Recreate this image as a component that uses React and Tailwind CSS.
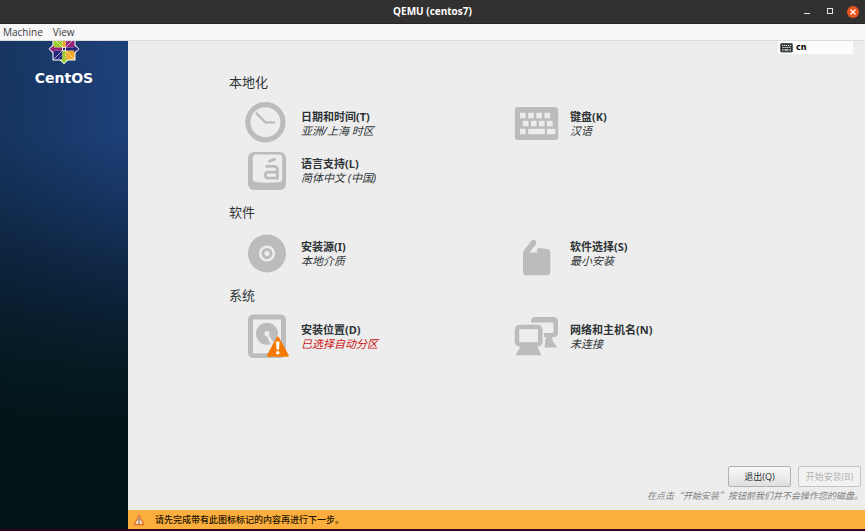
import React from "react";

function ClockIcon() {
  return (
    <svg width="44" height="44" viewBox="0 0 44 44" fill="none" stroke="#bcbcbc" aria-hidden="true">
      <circle cx="21.4" cy="20.2" r="17.6" strokeWidth="5.2" />
      <path d="M12 10.800 L21.400 20.400 H30.800" strokeWidth="2.4" />
    </svg>
  );
}

function KeyboardIcon() {
  const keys = [
    [7, 10.8, 5.6], [15.2, 10.8, 5.6], [23.3, 10.8, 5.6], [31.5, 10.8, 5.6],
    [9.8, 18.8, 5.6], [18, 18.8, 5.6], [26, 18.8, 5.6], [34, 18.8, 5.6],
    [7, 26.8, 5.6], [15.2, 26.8, 16.6], [34, 26.8, 8.4],
  ];
  return (
    <svg className="overflow-visible" width="44" height="44" viewBox="0 0 44 44" aria-hidden="true">
      <rect x="1.8" y="5" width="43.4" height="33" rx="3" fill="#bcbcbc" />
      {keys.map(([x, y, w]) => (
        <rect key={`${x}-${y}`} x={x} y={y} width={w} height="5.4" fill="#ededed" />
      ))}
    </svg>
  );
}

function LanguageIcon() {
  return (
    <svg width="44" height="44" viewBox="0 0 44 44" aria-hidden="true">
      <rect x="4" y="3" width="38" height="38" rx="6" fill="#bcbcbc" />
      <path d="M12 5.500 H35 Q38.200 5.500 38.200 9 V30 Q38.200 32.500 35 33 Q23.500 34.500 12 33 Q8.800 32.500 8.800 30 V9 Q8.800 5.500 12 5.500Z" fill="#ededed" />
      <g fill="none" stroke="#bcbcbc" strokeWidth="2.8">
        <path d="M24.300 12.600 L31.800 9.800" />
        <path d="M21.500 17.300 H30 Q33.400 17.300 33.400 20.500 V29.200 H24.500 Q21.300 29.200 21.300 26.200 Q21.300 23.200 24.500 23.200 H33.400" />
      </g>
    </svg>
  );
}

function DiscIcon() {
  return (
    <svg width="44" height="44" viewBox="0 0 44 44" aria-hidden="true">
      <circle cx="23" cy="21.5" r="19" fill="#bcbcbc" />
      <circle cx="23" cy="21.5" r="6.8" fill="#bcbcbc" stroke="#ededed" strokeWidth="2.6" />
      <circle cx="23" cy="21.5" r="2.6" fill="#ededed" />
    </svg>
  );
}

function PackageIcon() {
  return (
    <svg width="44" height="44" viewBox="0 0 44 44" aria-hidden="true">
      <path
        d="M10 20 L18 9 Q20 6.800 22.300 8.500 Q24.300 10.500 22.500 13 L16.500 20.500 H24.800 L23.700 18.500 Q24 15.800 26.800 16 L35 17.200 Q37.300 17.500 37.300 20 V40 Q37.300 43.300 34 43.300 H13 Q10 43.300 10 40Z"
        fill="#bcbcbc"
      />
    </svg>
  );
}

function DiskIcon() {
  return (
    <svg className="overflow-visible" width="44" height="44" viewBox="0 0 44 44" aria-hidden="true">
      <rect x="4" y="-0.5" width="38" height="43.5" rx="5" fill="#bcbcbc" />
      <rect x="9" y="4.5" width="28" height="33.8" fill="#ededed" />
      <circle cx="23" cy="18.700" r="11" fill="#bcbcbc" />
      <circle cx="23" cy="18.700" r="2.600" fill="#ededed" />
      <path d="M22.500 18.500 L36 38 L30 35Z" fill="#bcbcbc" stroke="#ededed" strokeWidth="1.500" />
      <path d="M33.800 22.800 L43.500 40.500 H24.200Z" fill="#f57900" stroke="#f57900" strokeWidth="2.500" strokeLinejoin="round" />
      <path d="M32 26.500 H35.500 L35 34.500 H32.500Z" fill="#fff" />
      <circle cx="33.800" cy="37.700" r="1.800" fill="#fff" />
    </svg>
  );
}

function NetworkIcon() {
  return (
    <svg className="overflow-visible" width="44" height="44" viewBox="0 0 44 44" aria-hidden="true">
      <path d="M33 20 H39.500 V26 L44.500 32.500 H31.500Z" fill="#bcbcbc" />
      <path d="M18 7.500 V7 Q18 2 22.500 2 H40.500 Q45 2 45 6.500 V18 Q45 22 41 22 H31 V18 H38.500 Q40.500 18 40.500 16 V9.500 Q40.500 7.500 38.500 7.500Z" fill="#bcbcbc" />
      <path d="M8 31 H24 L28.500 40.300 H2.500Z" fill="#bcbcbc" />
      <rect x="4" y="12" width="23.3" height="17.5" rx="2.5" fill="#ededed" stroke="#bcbcbc" strokeWidth="4.500" />
    </svg>
  );
}

function CentosLogo() {
  return (
    <svg width="32" height="24" viewBox="-16 -8 32 24" aria-hidden="true">
      <path d="M0 -15.500 L15.500 0 L0 15.500 L-15.500 0Z" fill="#e4e4ee" />
      <g stroke="#fff" strokeWidth="1">
        <rect x="-11" y="-11" width="10" height="10" fill="#9ccd2a" />
        <rect x="1" y="-11" width="10" height="10" fill="#932279" />
        <rect x="-11" y="1" width="10" height="10" fill="#262577" />
        <rect x="1" y="1" width="10" height="10" fill="#efa724" />
      </g>
      <path d="M-10.500 -10.500 L10.500 10.500 M10.500 -10.500 L-10.500 10.500" stroke="#fff" strokeWidth="0.8" opacity="0.8" />
      <path d="M-7 -11 L0 -4 L7 -11 M-7 11 L0 4 L7 11" fill="none" stroke="#fff" strokeWidth="0.6" opacity="0.6" />
      <path d="M-14.500 0 L-10 -3.500 V-1.400 H-2 V1.400 H-10 V3.500Z" fill="#932279" />
      <path d="M14.500 0 L10 -3.500 V-1.400 H2 V1.400 H10 V3.500Z" fill="#262577" />
      <path d="M0 14.500 L-3.500 10 H-1.400 V2 H1.400 V10 H3.500Z" fill="#9ccd2a" />
      <path d="M-1.400 -2 V-10 H1.400 V-2Z" fill="#efa724" />
      <rect x="-1.3" y="-1.3" width="2.6" height="2.6" fill="#262577" stroke="#fff" strokeWidth="0.6" />
    </svg>
  );
}

function LayoutIcon() {
  return (
    <svg width="13" height="10" viewBox="0 0 13 10" aria-hidden="true">
      <rect x="0.500" y="0.500" width="12" height="8.5" rx="1" fill="#2e3436" stroke="#59605f" />
      <path d="M2 2.500 H11 M2.500 4.500 H11" stroke="#f0f0f0" strokeWidth="1.200" strokeDasharray="1.300 0.700" />
      <path d="M2 6.800 H3.500 M4.500 6.800 H8.500 M9.500 6.800 H11" stroke="#f0f0f0" strokeWidth="1.200" />
    </svg>
  );
}

function WarningIcon() {
  return (
    <svg width="12" height="12" viewBox="0 0 12 12" aria-hidden="true">
      <path d="M6 1.500 L10.800 10.500 H1.200Z" fill="#f3e9d6" stroke="#e0702a" strokeWidth="1.400" strokeLinejoin="round" />
      <path d="M6 4.500 V7.500 M6 8.300 V9.500" stroke="#5c4a3a" strokeWidth="1.200" />
    </svg>
  );
}

const sections = [
  {
    title: "本地化",
    items: [
      { name: "日期和时间(T)", status: "亚洲/上海 时区", Icon: ClockIcon },
      { name: "键盘(K)", status: "汉语", Icon: KeyboardIcon },
      { name: "语言支持(L)", status: "简体中文 (中国)", Icon: LanguageIcon },
    ],
  },
  {
    title: "软件",
    items: [
      { name: "安装源(I)", status: "本地介质", Icon: DiscIcon },
      { name: "软件选择(S)", status: "最小安装", Icon: PackageIcon },
    ],
  },
  {
    title: "系统",
    items: [
      { name: "安装位置(D)", status: "已选择自动分区", Icon: DiskIcon, warn: true },
      { name: "网络和主机名(N)", status: "未连接", Icon: NetworkIcon },
    ],
  },
];

function Spoke({ name, status, Icon, warn }) {
  return (
    <button type="button" className="flex h-[46px] items-center gap-[13px] text-left text-[11px] leading-[14px] text-[#2e3436]">
      <span className="w-11 shrink-0">
        <Icon />
      </span>
      <span className="flex flex-col whitespace-nowrap">
        <span className="font-bold">{name}</span>
        <span className={warn ? "italic text-[#cc1414]" : "italic"}>{status}</span>
      </span>
    </button>
  );
}

function TitleBar() {
  return (
    <header className="grid h-6 shrink-0 grid-cols-[1fr_auto_1fr] items-center border-b border-[#252323] bg-[#333030] font-['Open_Sans',sans-serif] text-white">
      <span />
      <h1 className="text-[10px] font-bold">QEMU (centos7)</h1>
      <div className="flex items-center justify-end gap-[11px] pr-[6px]">
        <button type="button" aria-label="Minimize" className="flex size-3 items-center justify-center">
          <svg width="8" height="8" viewBox="0 0 8 8"><path d="M1 5.500 H7" stroke="#e6e6e6" /></svg>
        </button>
        <button type="button" aria-label="Maximize" className="flex size-3 items-center justify-center">
          <svg width="8" height="8" viewBox="0 0 8 8"><rect x="1.500" y="0.500" width="5" height="5" fill="none" stroke="#e6e6e6" /></svg>
        </button>
        <button type="button" aria-label="Close" className="flex size-3 items-center justify-center rounded-full bg-[#e95420]">
          <svg width="8" height="8" viewBox="0 0 8 8"><path d="M1.500 1.500 L6.500 6.500 M6.500 1.500 L1.500 6.500" stroke="#fff" strokeWidth="1.200" /></svg>
        </button>
      </div>
    </header>
  );
}

export default function App() {
  return (
    <div lang="zh-CN" className="flex min-h-screen flex-col border-b-2 border-[#2c001e] bg-[#ededed] font-['Noto_Sans','Noto_Sans_CJK_SC',sans-serif]">
      <TitleBar />
      <nav className="flex h-[17px] shrink-0 items-center gap-[10px] border-b border-[#dcdcdc] bg-[#f7f7f7] px-[3px] font-['Open_Sans',sans-serif] text-[10px] leading-4 text-[#3d3d3d]">
        <button type="button">Machine</button>
        <button type="button">View</button>
      </nav>
      <div className="flex flex-1">
        <aside className="flex w-32 shrink-0 flex-col items-center bg-[linear-gradient(90deg,rgba(2,20,24,0.25),transparent_90%),linear-gradient(180deg,#1d4078_0%,#1c3f76_20%,#173563_32%,#11294a_44%,#0a2033_56%,#051a22_67%,#021519_78%,#021417_100%)]">
          <CentosLogo />
          <p className="mt-[3px] font-['DejaVu_Sans',sans-serif] text-[14px] font-bold leading-5 text-white">CentOS</p>
        </aside>
        <main className="flex min-w-0 flex-1 flex-col">
          <div className="flex justify-end pr-3">
            <button type="button" className="flex h-[13px] w-[75px] items-center gap-[3px] bg-[#fcfcfc] pl-[2px] font-['DejaVu_Sans',sans-serif] text-[8px] font-bold leading-3 text-black">
              <LayoutIcon />
              cn
            </button>
          </div>
          <div className="flex flex-col gap-2 pl-[101px] pr-[83px] pt-[18px]">
            {sections.map(({ title, items }) => (
              <section key={title}>
                <h2 className="mb-[9px] text-[13px] leading-5 text-[#2e3436]">{title}</h2>
                <div className="grid grid-cols-2 gap-y-px pl-[15px]">
                  {items.map((item) => (
                    <Spoke key={item.name} {...item} />
                  ))}
                </div>
              </section>
            ))}
          </div>
          <footer className="mt-auto">
            <div className="flex justify-end gap-[7px] pr-1 text-[9px] leading-3">
              <button type="button" className="h-[21px] w-[63px] rounded-[2px] border border-[#b0b0b0] bg-linear-to-b from-[#f8f8f8] to-[#e0e0e0] text-[#2e3436]">退出(Q)</button>
              <button type="button" disabled className="h-[21px] w-[63px] rounded-[2px] border border-[#c4c4c4] bg-[#f2f2f1] text-[#b4b4b2]">开始安装(B)</button>
            </div>
            <p className="pb-1 pr-[2px] pt-[2px] text-right font-['Noto_Sans_CJK_SC',sans-serif] text-[9px] italic leading-[14px] text-[#7d7f7f]">
              在点击“开始安装”按钮前我们并不会操作您的磁盘。
            </p>
            <div role="status" className="mt-[3px] flex h-[19px] items-center gap-[10px] bg-[#fcaf3e] pl-[5px] font-['Noto_Sans_CJK_SC',sans-serif] text-[9px] font-medium leading-3 text-[#1d1400]">
              <WarningIcon />
              请先完成带有此图标标记的内容再进行下一步。
            </div>
          </footer>
        </main>
      </div>
    </div>
  );
}
